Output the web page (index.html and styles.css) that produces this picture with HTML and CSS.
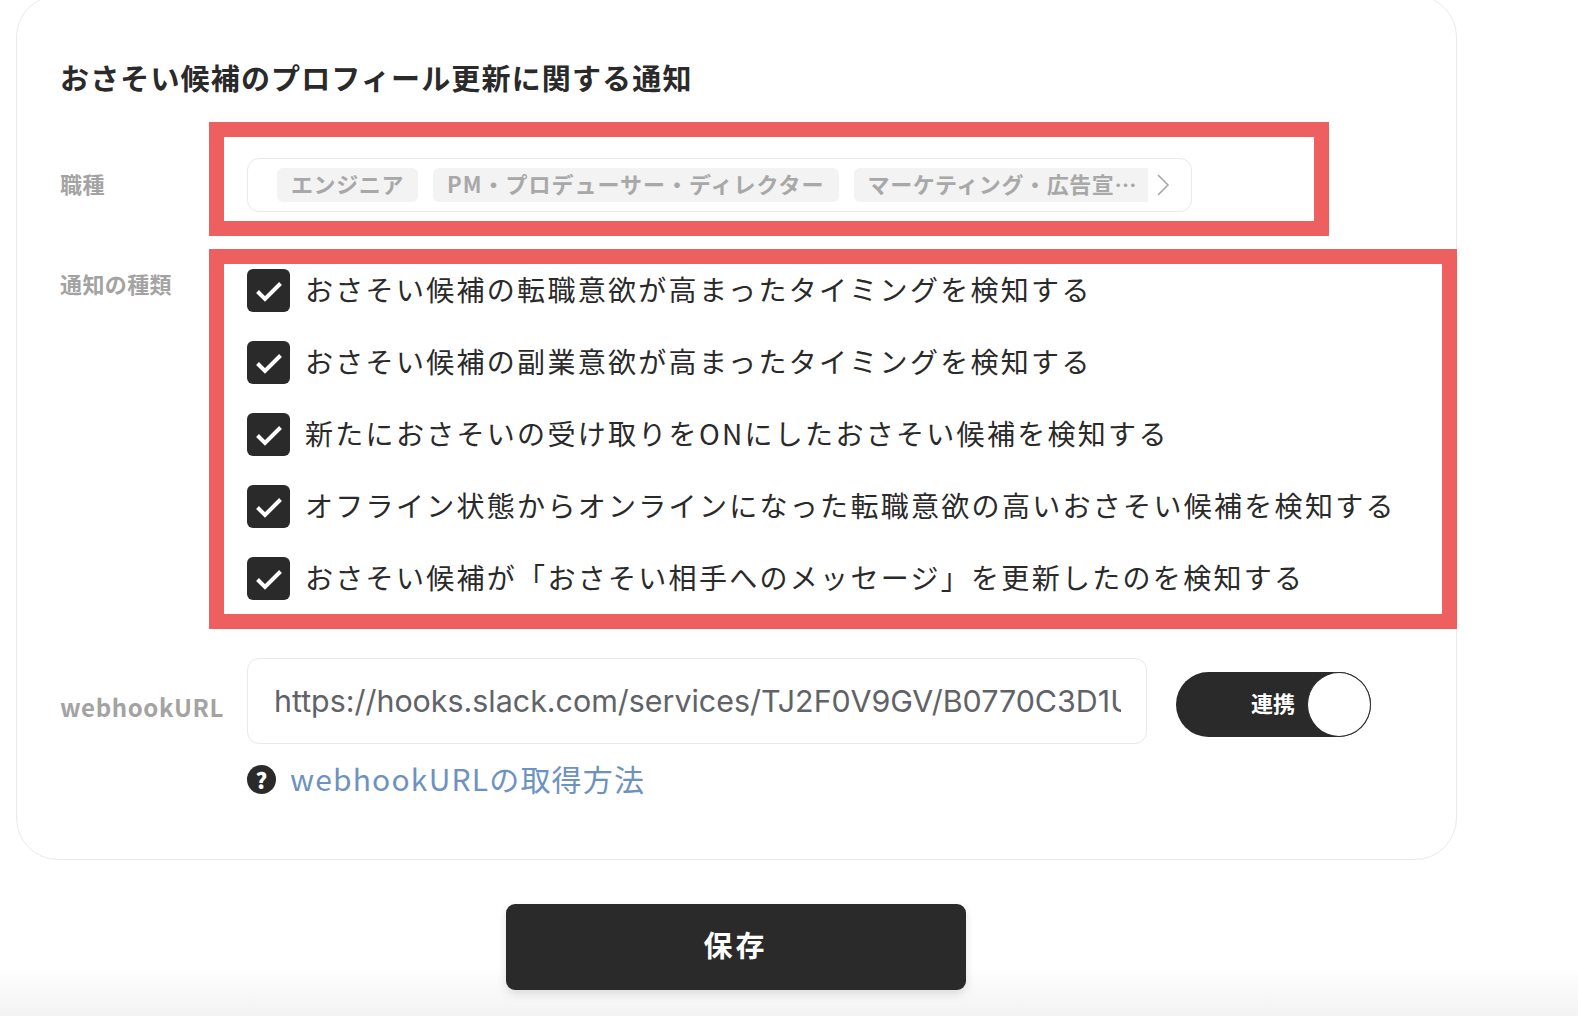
FILE: index.html
```html
<!DOCTYPE html>
<html lang="ja">
<head>
  <meta charset="UTF-8" />
  <meta name="viewport" content="width=device-width, initial-scale=1.0" />
  <title>通知設定</title>
  <link rel="stylesheet" href="styles.css">
</head>
<body>
  <div class="page">
    <section class="card">
      <h2 class="card-title">おさそい候補のプロフィール更新に関する通知</h2>

      <div class="row row-job">
        <div class="label">職種</div>
        <div class="job-select">
          <span class="chip">エンジニア</span>
          <span class="chip chip-wide">PM・プロデューサー・ディレクター</span>
          <span class="chip chip-cut">マーケティング・広告宣…</span>
          <svg class="chevron" width="14" height="22" viewBox="0 0 14 22"><path d="M2 1l10 10L2 21" fill="none" stroke="#a8a8a8" stroke-width="1.6"/></svg>
        </div>
      </div>

      <div class="row row-types">
        <div class="label">通知の種類</div>
        <div class="check-list">
          <label class="check"><span class="box"><svg width="28" height="22" viewBox="0 0 28 22"><path d="M2.5 11.5l7.5 7.5L25.5 3.5" fill="none" stroke="#fff" stroke-width="4"/></svg></span>おさそい候補の転職意欲が高まったタイミングを検知する</label>
          <label class="check"><span class="box"><svg width="28" height="22" viewBox="0 0 28 22"><path d="M2.5 11.5l7.5 7.5L25.5 3.5" fill="none" stroke="#fff" stroke-width="4"/></svg></span>おさそい候補の副業意欲が高まったタイミングを検知する</label>
          <label class="check"><span class="box"><svg width="28" height="22" viewBox="0 0 28 22"><path d="M2.5 11.5l7.5 7.5L25.5 3.5" fill="none" stroke="#fff" stroke-width="4"/></svg></span>新たにおさそいの受け取りをONにしたおさそい候補を検知する</label>
          <label class="check"><span class="box"><svg width="28" height="22" viewBox="0 0 28 22"><path d="M2.5 11.5l7.5 7.5L25.5 3.5" fill="none" stroke="#fff" stroke-width="4"/></svg></span>オフライン状態からオンラインになった転職意欲の高いおさそい候補を検知する</label>
          <label class="check"><span class="box"><svg width="28" height="22" viewBox="0 0 28 22"><path d="M2.5 11.5l7.5 7.5L25.5 3.5" fill="none" stroke="#fff" stroke-width="4"/></svg></span>おさそい候補が「おさそい相手へのメッセージ」を更新したのを検知する</label>
        </div>
      </div>

      <div class="row row-webhook">
        <div class="label label-url">webhookURL</div>
        <div class="url-input"><span class="url-text">https://hooks.slack.com/services/TJ2F0V9GV/B0770C3D1U8/x</span></div>
        <div class="toggle">
          <span class="toggle-text">連携</span>
          <span class="knob"></span>
        </div>
      </div>

      <div class="help">
        <span class="help-icon">?</span>
        <a class="help-link" href="#">webhookURLの取得方法</a>
      </div>

      <div class="mark mark-job"></div>
      <div class="mark mark-types"></div>
    </section>

    <div class="actions">
      <button class="save">保存</button>
    </div>
  </div>
</body>
</html>
```

FILE: styles.css
```css
html, body {
  margin: 0;
  padding: 0;
  height: 1016px;
  overflow: hidden;
}
body {
  font-family: "Noto Sans CJK JP", "Noto Sans", sans-serif;
  color: #2a2a2a;
  background: linear-gradient(to bottom, #fff 965px, #f3f3f3 1016px);
}
.page {
  width: 1441px;
  margin-left: 16px;
}
.card {
  position: relative;
  box-sizing: border-box;
  height: 865px;
  margin-top: -5px;
  padding: 0 0 0 43px;
  background: #fff;
  border: 1px solid #eaeaea;
  border-radius: 42px;
}
.card-title {
  margin: 0;
  padding-top: 60px;
  font-size: 29px;
  line-height: 42px;
  font-weight: 700;
  letter-spacing: 1.15px;
}
.row {
  display: flex;
}
.label {
  width: 187px;
  flex: none;
  color: #a3a3a3;
  font-size: 22px;
  font-weight: 700;
  letter-spacing: 0.4px;
}
.row-job {
  margin-top: 60px;
}
.row-job .label {
  line-height: 50px;
}
.job-select {
  box-sizing: border-box;
  display: flex;
  align-items: center;
  width: 945px;
  height: 54px;
  padding-left: 29px;
  border: 1px solid #e9e9e9;
  border-radius: 12px;
  overflow: hidden;
}
.chip {
  flex: none;
  height: 34px;
  margin-right: 15px;
  padding: 0 14px;
  background: #f3f3f3;
  border-radius: 6px;
  color: #a8a8a8;
  font-size: 22px;
  line-height: 31px;
  font-weight: 700;
  letter-spacing: 0.6px;
  white-space: nowrap;
}
.chip-wide {
  letter-spacing: 1px;
}
.chip-cut {
  margin-right: 8px;
  padding-right: 11px;
  border-radius: 6px 0 0 6px;
}
.chevron {
  flex: none;
}
.row-types {
  margin-top: 55px;
}
.row-types .label {
  line-height: 32px;
}
.check-list {
  display: flex;
  flex-direction: column;
  gap: 29px;
}
.check {
  display: flex;
  align-items: center;
  height: 43px;
  font-size: 28px;
  letter-spacing: 2.3px;
  white-space: nowrap;
}
.box {
  display: flex;
  align-items: center;
  justify-content: center;
  width: 43px;
  height: 43px;
  margin: 4px 15px 0 0;
  background: #2a2a2a;
  border-radius: 6px;
}
.row-webhook {
  align-items: flex-start;
  margin-top: 60px;
}
.label-url {
  font-size: 24px;
  margin-top: 31px;
  letter-spacing: 0.6px;
}
.url-input {
  box-sizing: border-box;
  width: 900px;
  height: 86px;
  padding: 0 25px 0 26px;
  border: 1px solid #e9e9e9;
  border-radius: 12px;
  color: #5f6368;
  font-family: "Inter", "Noto Sans", sans-serif;
  font-size: 30.4px;
  line-height: 84px;
}
.url-text {
  display: block;
  overflow: hidden;
  white-space: nowrap;
}
.toggle {
  box-sizing: border-box;
  display: flex;
  align-items: center;
  justify-content: flex-end;
  width: 195px;
  height: 65px;
  margin: 14px 0 0 29px;
  background: #2a2a2a;
  border-radius: 33px;
}
.toggle-text {
  margin: 0 12px 5px 0;
  color: #fff;
  font-size: 22px;
  font-weight: 700;
}
.knob {
  box-sizing: border-box;
  width: 64px;
  height: 65px;
  background: #fff;
  border: 1px solid #2a2a2a;
  border-radius: 50%;
}
.help {
  display: flex;
  align-items: center;
  margin: 13px 0 0 187px;
}
.help-icon {
  display: flex;
  align-items: center;
  justify-content: center;
  width: 29px;
  height: 29px;
  margin: 2px 14px 0 0;
  background: #2a2a2a;
  border-radius: 50%;
  color: #fff;
  font-size: 22px;
  font-weight: 900;
}
.help-link {
  color: #6d92bf;
  font-size: 30px;
  line-height: 42px;
  letter-spacing: 1.2px;
  text-decoration: none;
}
.mark {
  position: absolute;
  box-sizing: border-box;
  border: 15px solid #ee5f5f;
}
.mark-job {
  left: 192px;
  top: 126px;
  width: 1120px;
  height: 114px;
}
.mark-types {
  left: 192px;
  top: 253px;
  width: 1248px;
  height: 380px;
}
.actions {
  display: flex;
  justify-content: center;
  margin-top: 44px;
  padding-right: 2px;
}
.save {
  width: 460px;
  height: 86px;
  padding-bottom: 8px;
  background: #2a2a2a;
  border: none;
  border-radius: 9px;
  box-shadow: 0 4px 10px rgba(0, 0, 0, 0.12);
  color: #fff;
  font-family: inherit;
  font-size: 29px;
  font-weight: 700;
  letter-spacing: 3px;
}
```
